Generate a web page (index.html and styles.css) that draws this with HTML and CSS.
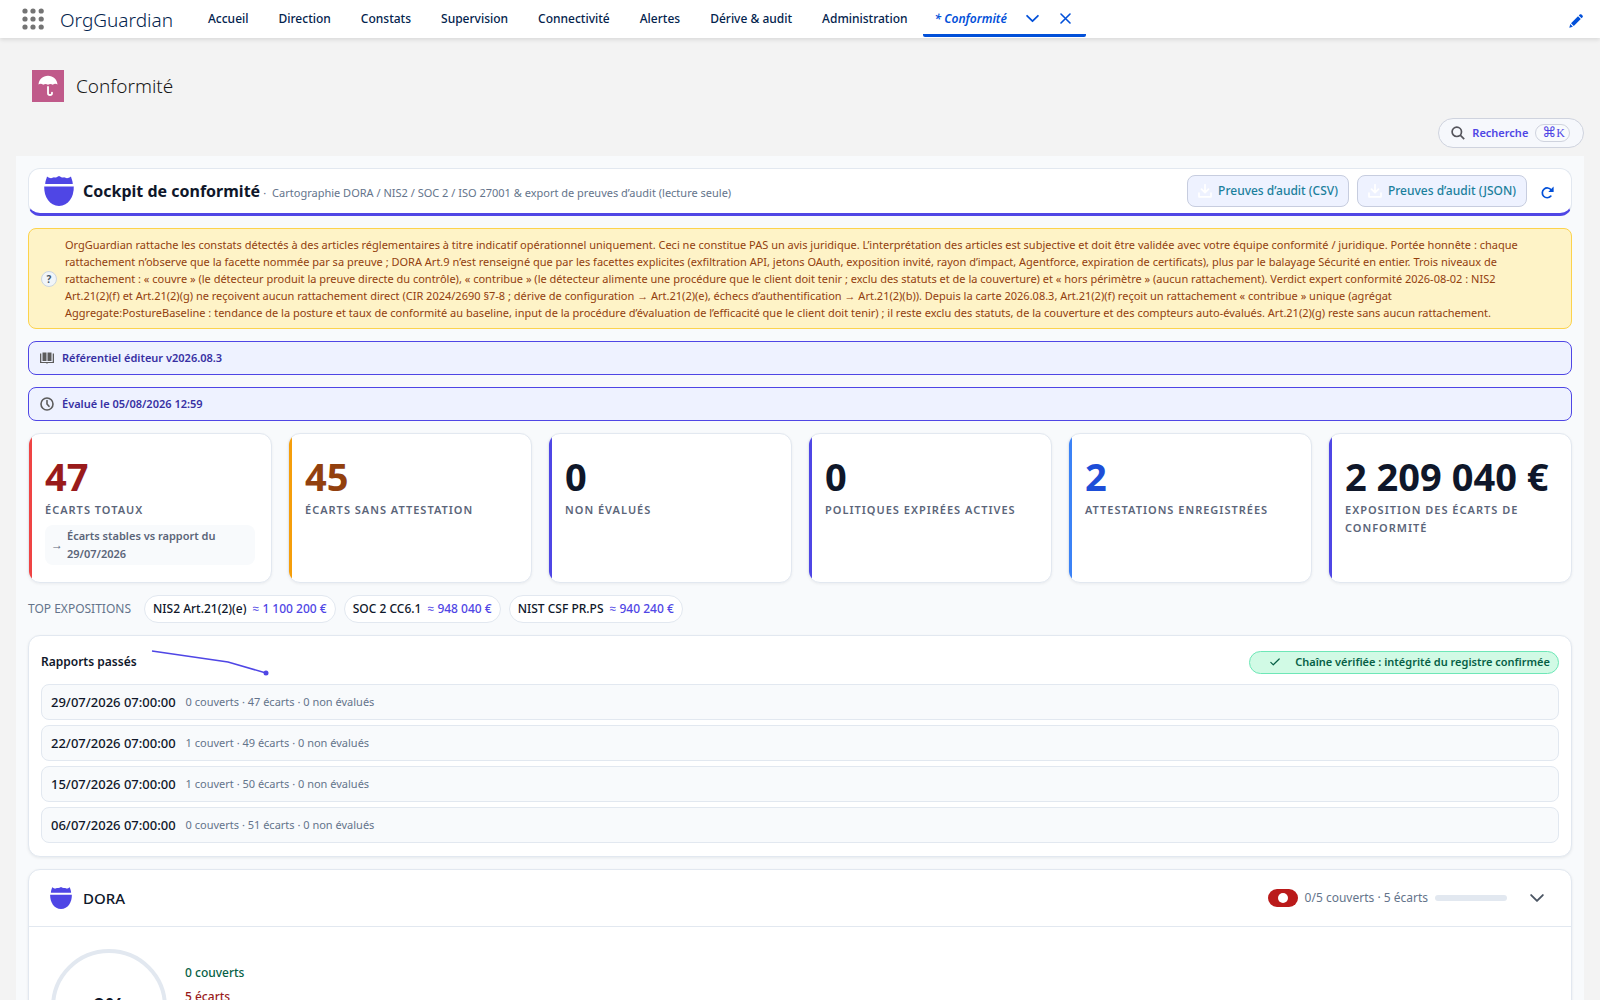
FILE: index.html
```html
<!DOCTYPE html>
<html lang="fr">
<head>
<meta charset="utf-8">
<meta name="viewport" content="width=device-width, initial-scale=1">
<title>Conformité | OrgGuardian</title>
<link rel="stylesheet" href="styles.css">
</head>
<body>
<svg width="0" height="0" class="defs" aria-hidden="true">
  <symbol id="shield" viewBox="0 0 30 30">
    <path d="M3 0.500C4.500 1.800 6 2.200 7 2.200 8 2.200 9 1.200 10 1.200 11.500 2 13 1.200 15 0 17 1.200 18.500 2 20 1.200 21 1.200 22 2.200 23 2.200 24 2.200 25.500 1.800 27 0.500 27.200 2.500 28.800 4.500 28.800 8H1.200C1.200 4.500 2.800 2.500 3 0.500Z"/>
    <path d="M0.200 10.500H29.800C30 21 24.500 29.500 15 30 5.500 29.500 0 21 0.200 10.500Z"/>
  </symbol>
  <symbol id="chevron" viewBox="0 0 12 12">
    <path d="M1 3.500 6 8.500 11 3.500" fill="none" stroke="currentColor" stroke-width="1.600" stroke-linecap="round" stroke-linejoin="round"/>
  </symbol>
  <symbol id="download" viewBox="0 0 14 14">
    <path d="M7 0.800V8M3.500 5.200 7 8.700 10.500 5.200M1 9V12.800H13V9" fill="none" stroke="currentColor" stroke-width="1.700" stroke-linecap="round" stroke-linejoin="round"/>
  </symbol>
</svg>

<header class="topbar">
  <button class="waffle" aria-label="Lanceur d’applications">
    <svg width="22" height="22" viewBox="0 0 22 22" fill="#747474"><circle cx="3" cy="3" r="2.600"/><circle cx="11" cy="3" r="2.600"/><circle cx="19.200" cy="3" r="2.600"/><circle cx="3" cy="11" r="2.600"/><circle cx="11" cy="11" r="2.600"/><circle cx="19.200" cy="11" r="2.600"/><circle cx="3" cy="19" r="2.600"/><circle cx="11" cy="19" r="2.600"/><circle cx="19.200" cy="19" r="2.600"/></svg>
  </button>
  <span class="app-name">OrgGuardian</span>
  <nav class="nav">
    <a href="#">Accueil</a>
    <a href="#">Direction</a>
    <a href="#">Constats</a>
    <a href="#">Supervision</a>
    <a href="#">Connectivité</a>
    <a href="#">Alertes</a>
    <a href="#">Dérive &amp; audit</a>
    <a href="#">Administration</a>
  </nav>
  <div class="tab">
    <a href="#" aria-current="page">* Conformité</a>
    <button aria-label="Options de l’onglet"><svg width="13" height="13"><use href="#chevron"/></svg></button>
    <button aria-label="Fermer l’onglet"><svg width="11" height="11" viewBox="0 0 11 11"><path d="M1 1 10 10M10 1 1 10" stroke="currentColor" stroke-width="1.600" stroke-linecap="round"/></svg></button>
  </div>
  <button class="edit" aria-label="Modifier la navigation">
    <svg width="14" height="14" viewBox="0 0 14 14" fill="currentColor"><path d="M0.300 13.700 1.300 10.100 3.900 12.700ZM2 9.200 9 2.200 11.800 5 4.800 12ZM9.800 1.400 10.700 0.500C11.200 0 12 0 12.500 0.500L13.500 1.500C14 2 14 2.800 13.500 3.300L12.600 4.200Z"/></svg>
  </button>
</header>

<div class="page-head">
  <span class="page-icon">
    <svg width="20" height="22" viewBox="0 0 20 22" fill="#fff"><path d="M0.500 9.600C0.800 4.300 4.800 0.800 10 0.800S19.200 4.300 19.500 9.600C18.300 8.600 16.300 8.600 14.800 9.700 13.300 8.600 11.500 8.600 10 9.700 8.500 8.600 6.700 8.600 5.200 9.700 3.700 8.600 1.700 8.600 0.500 9.600Z"/><path d="M10 12V18.200C10 20.600 14 20.600 14 18.200V17.600" fill="none" stroke="#fff" stroke-width="1.800" stroke-linecap="round"/></svg>
  </span>
  <h1>Conformité</h1>
</div>

<div class="search-row">
  <button class="search">
    <svg width="14" height="14" viewBox="0 0 14 14" fill="none" stroke="#55555c" stroke-width="1.700"><circle cx="5.800" cy="5.800" r="4.700"/><path d="M9.200 9.200 13.200 13.200"/></svg>
    <span>Recherche</span>
    <kbd><span class="cmd">⌘</span>K</kbd>
  </button>
</div>

<main class="cockpit">
  <section class="hero">
    <svg class="shield" width="30" height="30"><use href="#shield"/></svg>
    <h2>Cockpit de conformité</h2>
    <p><span class="dot">·</span>Cartographie DORA / NIS2 / SOC 2 / ISO 27001 &amp; export de preuves d’audit (lecture seule)</p>
    <div class="actions">
      <button class="export"><svg width="14" height="14"><use href="#download"/></svg>Preuves d’audit (CSV)</button>
      <button class="export"><svg width="14" height="14"><use href="#download"/></svg>Preuves d’audit (JSON)</button>
      <button class="refresh" aria-label="Actualiser"><svg width="13" height="13" viewBox="0 0 13 13"><path d="M9.800 10.200A4.900 4.900 0 1 1 10.200 4" fill="none" stroke="currentColor" stroke-width="1.700" stroke-linecap="round"/><path d="M12.600 0.600V5.900H7.300Z" fill="currentColor"/></svg></button>
    </div>
  </section>

  <section class="notice">
    <span class="help">?</span>
    <p>OrgGuardian rattache les constats détectés à des articles réglementaires à titre indicatif opérationnel uniquement. Ceci ne constitue PAS un avis juridique. L’interprétation des articles est subjective et doit être validée avec votre équipe conformité / juridique. Portée honnête : chaque rattachement n’observe que la facette nommée par sa preuve ; DORA Art.9 n’est renseigné que par les facettes explicites (exfiltration API, jetons OAuth, exposition invité, rayon d’impact, Agentforce, expiration de certificats), plus par le balayage Sécurité en entier. Trois niveaux de rattachement : « couvre » (le détecteur produit la preuve directe du contrôle), « contribue » (le détecteur alimente une procédure que le client doit tenir ; exclu des statuts et de la couverture) et « hors périmètre » (aucun rattachement). Verdict expert conformité 2026-08-02 : NIS2 Art.21(2)(f) et Art.21(2)(g) ne reçoivent aucun rattachement direct (CIR 2024/2690 §7-8 ; dérive de configuration → Art.21(2)(e), échecs d’authentification → Art.21(2)(b)). Depuis la carte 2026.08.3, Art.21(2)(f) reçoit un rattachement « contribue » unique (agrégat Aggregate:PostureBaseline : tendance de la posture et taux de conformité au baseline, input de la procédure d’évaluation de l’efficacité que le client doit tenir) ; il reste exclu des statuts, de la couverture et des compteurs auto-évalués. Art.21(2)(g) reste sans aucun rattachement.</p>
  </section>

  <div class="info">
    <svg width="14" height="14" viewBox="0 0 14 14" fill="#5c5c5c"><path d="M2.500 1.500H6.500V10H2.500ZM7.500 1.500H11.500V10H7.500Z"/><path d="M0 2.500H1.300V11H12.700V2.500H14V12H8L7 12.800 6 12H0Z"/></svg>
    Référentiel éditeur v2026.08.3
  </div>
  <div class="info">
    <svg width="14" height="14" viewBox="0 0 14 14" fill="none" stroke="#5c5c5c" stroke-width="1.600"><circle cx="7" cy="7" r="6"/><path d="M7 3.500V7L9 9.300" stroke-linecap="round"/></svg>
    Évalué le 05/08/2026 12:59
  </div>

  <section class="kpis">
    <article class="kpi red">
      <strong>47</strong>
      <span class="label">ÉCARTS TOTAUX</span>
      <div class="trend"><span class="arrow">→</span><span>Écarts stables vs rapport du 29/07/2026</span></div>
    </article>
    <article class="kpi amber"><strong>45</strong><span class="label">ÉCARTS SANS ATTESTATION</span></article>
    <article class="kpi"><strong>0</strong><span class="label">NON ÉVALUÉS</span></article>
    <article class="kpi"><strong>0</strong><span class="label">POLITIQUES EXPIRÉES ACTIVES</span></article>
    <article class="kpi blue"><strong>2</strong><span class="label">ATTESTATIONS ENREGISTRÉES</span></article>
    <article class="kpi"><strong>2&nbsp;209&nbsp;040&nbsp;€</strong><span class="label">EXPOSITION DES ÉCARTS DE CONFORMITÉ</span></article>
  </section>

  <div class="top-exp">
    <span class="caption">TOP EXPOSITIONS</span>
    <span class="chip">NIS2 Art.21(2)(e)<b>≈ 1 100 200 €</b></span>
    <span class="chip">SOC 2 CC6.1<b>≈ 948 040 €</b></span>
    <span class="chip">NIST CSF PR.PS<b>≈ 940 240 €</b></span>
  </div>

  <section class="card reports">
    <div class="reports-head">
      <h3>Rapports passés</h3>
      <svg width="120" height="28" viewBox="0 0 120 28" aria-hidden="true"><path d="M2 3 78 14 116 25" fill="none" stroke="#4f46e5" stroke-width="1.500"/><circle cx="116" cy="25" r="2.500" fill="#4f46e5"/></svg>
      <span class="verified">
        <svg width="10" height="8" viewBox="0 0 10 8"><path d="M0.800 4.300 3.300 6.800 9.200 1" fill="none" stroke="currentColor" stroke-width="1.200" stroke-linecap="round" stroke-linejoin="round"/></svg>
        Chaîne vérifiée : intégrité du registre confirmée
      </span>
    </div>
    <ul>
      <li><time>29/07/2026 07:00:00</time>0 couverts · 47 écarts · 0 non évalués</li>
      <li><time>22/07/2026 07:00:00</time>1 couvert · 49 écarts · 0 non évalués</li>
      <li><time>15/07/2026 07:00:00</time>1 couvert · 50 écarts · 0 non évalués</li>
      <li><time>06/07/2026 07:00:00</time>0 couverts · 51 écarts · 0 non évalués</li>
    </ul>
  </section>

  <section class="card framework">
    <div class="framework-head">
      <svg class="shield" width="22" height="22"><use href="#shield"/></svg>
      <h3>DORA</h3>
      <span class="status"><i></i></span>
      <span class="counts">0/5 couverts · 5 écarts</span>
      <span class="bar"></span>
      <button aria-label="Replier DORA"><svg width="14" height="14"><use href="#chevron"/></svg></button>
    </div>
    <div class="framework-body">
      <div class="ring">0%</div>
      <div class="legend">
        <span class="covered">0 couverts</span>
        <span class="gaps">5 écarts</span>
      </div>
    </div>
  </section>
</main>
</body>
</html>
```
FILE: styles.css
```css
* { box-sizing: border-box; }
body {
  margin: 0;
  background: #f3f3f3;
  color: #0f172a;
  font: 12px/18px "Noto Sans", "Open Sans", sans-serif;
}
h1, h2, h3, p, ul { margin: 0; padding: 0; font-weight: 400; }
ul { list-style: none; }
svg { display: block; flex: none; }
.defs { position: absolute; }
button {
  display: flex;
  align-items: center;
  padding: 0;
  border: 0;
  background: none;
  font: inherit;
  color: inherit;
  cursor: pointer;
}
a { color: inherit; text-decoration: none; }

/* Top navigation */
.topbar {
  position: relative;
  display: flex;
  align-items: center;
  height: 38px;
  padding: 0 17px 0 22px;
  background: #fff;
  color: #03234d;
  box-shadow: 0 2px 4px rgba(0, 0, 0, .1);
}
.app-name { margin: 2px 20px 0 16px; font-size: 19px; line-height: 30px; font-weight: 300; }
.nav { display: flex; font-weight: 500; }
.nav a { padding: 0 15px; line-height: 36px; }
.tab {
  display: flex;
  align-items: center;
  gap: 19px;
  align-self: stretch;
  margin-bottom: 1px;
  padding: 3px 15px 0 12px;
  border-bottom: 3px solid #0250d9;
  border-radius: 0 0 2px 2px;
  color: #0250d9;
}
.tab a { font-style: italic; font-weight: 600; }
.tab button + button { margin-left: 2px; }
.edit { margin-left: auto; padding: 3px 0 0; color: #0250d9; }

/* Page title */
.page-head { display: flex; align-items: center; gap: 12px; padding: 32px 32px 16px; }
.page-icon {
  display: grid;
  place-items: center;
  width: 32px;
  height: 32px;
  background: #c05a8a;
}
.page-head h1 { font-size: 19px; line-height: 28px; font-weight: 300; color: #181818; }

.search-row { display: flex; justify-content: flex-end; padding: 0 16px 8px; }
.search {
  gap: 7px;
  height: 30px;
  padding: 0 13px 0 12px;
  border: 1px solid #cfd3de;
  border-radius: 15px;
  background: #f6f8fc;
  color: #4f46e5;
  font-size: 11px;
  font-weight: 600;
}
.search kbd {
  height: 18px;
  padding: 0 4px 0 6px;
  border: 1px solid #cfd3de;
  border-radius: 9px;
  background: #f8fafc;
  font: 12px/14px "Liberation Serif", serif;
}
.cmd { font: 14px/14px "DejaVu Sans", sans-serif; }

/* Cockpit */
.cockpit {
  display: flex;
  flex-direction: column;
  gap: 12px;
  margin: 0 16px;
  padding: 12px;
  background: #f8fafc;
}
.hero {
  display: flex;
  align-items: center;
  height: 48px;
  padding: 0 14px 0 15px;
  border: 1px solid #e2e8f0;
  border-bottom: 3px solid #4f46e5;
  border-radius: 12px;
  background: #fff;
}
.shield { fill: #4f46e5; }
.hero h2 { margin-left: 9px; font-size: 16px; line-height: 24px; font-weight: 700; }
.hero p { padding-top: 3px; font-size: 11px; color: #64748b; }
.dot { margin: 0 6px 0 3px; }
.actions { display: flex; gap: 8px; margin-left: auto; }
.export {
  gap: 6px;
  height: 32px;
  padding: 0 10px;
  border: 1px solid #c7cddf;
  border-radius: 8px;
  background: #eef2ff;
  color: #1b7f9c;
  font-size: 12px;
  font-weight: 500;
}
.export svg { color: #fff; }
.refresh { padding: 3px 3px 0 6px; color: #0250d9; }

.notice {
  display: flex;
  align-items: center;
  gap: 8px;
  padding: 7px 40px 7px 12px;
  border: 1px solid #fcd34d;
  border-radius: 8px;
  background: #fef3c7;
  color: #92400e;
  font-size: 11px;
  line-height: 17px;
}
.help {
  flex: none;
  width: 16px;
  height: 16px;
  border: 1px solid #cbd5e1;
  border-radius: 50%;
  background: #f1f5f9;
  color: #475569;
  font-size: 10px;
  line-height: 14px;
  font-weight: 700;
  text-align: center;
}
.info {
  display: flex;
  align-items: center;
  gap: 8px;
  height: 34px;
  padding: 0 11px;
  border: 1px solid #4f46e5;
  border-radius: 8px;
  background: #eef2ff;
  color: #3730a3;
  font-size: 11px;
  font-weight: 600;
}

/* Key figures */
.kpis { display: grid; grid-template-columns: repeat(6, 1fr); gap: 16px; }
.kpi {
  --accent: #4f46e5;
  --value: #0f172a;
  position: relative;
  display: flex;
  flex-direction: column;
  min-height: 150px;
  padding: 19px 16px 16px;
  overflow: hidden;
  border: 1px solid #e2e8f0;
  border-radius: 12px;
  background: #fff;
  box-shadow: 0 1px 3px rgba(15, 23, 42, .06);
}
.kpi::before { content: ""; position: absolute; inset: 0 auto 0 0; width: 3px; background: var(--accent); }
.kpi strong { margin-bottom: 2px; color: var(--value); font-size: 38px; line-height: 46px; font-weight: 700; white-space: nowrap; }
.label { color: #5b6579; font-size: 11px; font-weight: 600; letter-spacing: 1px; }
.red { --accent: #ef4444; --value: #991b1b; }
.amber { --accent: #f59e0b; --value: #92400e; }
.blue { --accent: #3b82f6; --value: #1d4ed8; }
.trend {
  display: flex;
  align-items: center;
  gap: 4px;
  margin-top: 6px;
  padding: 2px 6px;
  border-radius: 8px;
  background: #f8fafc;
  color: #5b6579;
  font-size: 11px;
  font-weight: 600;
}
.arrow { font-size: 12px; }

.top-exp { display: flex; align-items: center; gap: 8px; }
.caption { margin-right: 5px; color: #64748b; }
.chip {
  display: flex;
  gap: 6px;
  height: 28px;
  padding: 0 8px;
  border: 1px solid #e2e8f0;
  border-radius: 14px;
  background: #fff;
  line-height: 26px;
  font-weight: 500;
}
.chip b { color: #4f46e5; font-weight: 500; }

.card {
  border: 1px solid #e2e8f0;
  border-radius: 12px;
  background: #fff;
  box-shadow: 0 1px 3px rgba(15, 23, 42, .08);
}
.reports { padding: 12px 12px 13px; }
.reports-head { display: flex; align-items: center; height: 28px; margin-bottom: 8px; }
.reports-head h3 { margin-right: 13px; font-size: 12px; font-weight: 600; }
.verified {
  display: flex;
  align-items: center;
  gap: 15px;
  height: 23px;
  margin-left: auto;
  padding: 0 8px 0 20px;
  border: 1px solid #6ee7b7;
  border-radius: 12px;
  background: #d1fae5;
  color: #065f46;
  font-size: 11px;
  font-weight: 600;
}
.reports ul { display: grid; gap: 5px; }
.reports li {
  display: flex;
  align-items: center;
  gap: 10px;
  height: 36px;
  padding: 0 9px;
  border: 1px solid #e2e8f0;
  border-radius: 8px;
  background: #f8fafc;
  color: #64748b;
  font-size: 11px;
}
.reports time { color: #0f172a; font-size: 13px; font-weight: 500; }

.framework-head {
  display: flex;
  align-items: center;
  height: 57px;
  padding: 0 27px 0 21px;
  border-bottom: 1px solid #e2e8f0;
}
.framework-head h3 { margin-left: 11px; font-size: 15px; font-weight: 500; }
.status {
  display: grid;
  place-items: center;
  width: 30px;
  height: 18px;
  margin: 0 7px 0 auto;
  border-radius: 9px;
  background: #ba1a1a;
}
.status i { width: 10px; height: 10px; border-radius: 50%; background: #fff; }
.counts { color: #64748b; font-size: 12px; }
.bar { width: 72px; height: 6px; margin: 0 23px 0 7px; border-radius: 3px; background: #e2e8f0; }
.framework-head button { color: #4b5563; }
.framework-body { display: flex; align-items: center; gap: 18px; padding: 22px; }
.ring {
  display: grid;
  place-items: center;
  width: 116px;
  height: 116px;
  padding-bottom: 6px;
  border: 4px solid #e2e8f0;
  border-radius: 50%;
  font-size: 22px;
  line-height: 30px;
  font-weight: 700;
}
.legend { display: grid; gap: 6px; height: 86px; align-content: start; font-weight: 500; }
.covered { color: #065f46; }
.gaps { color: #991b1b; }
```
